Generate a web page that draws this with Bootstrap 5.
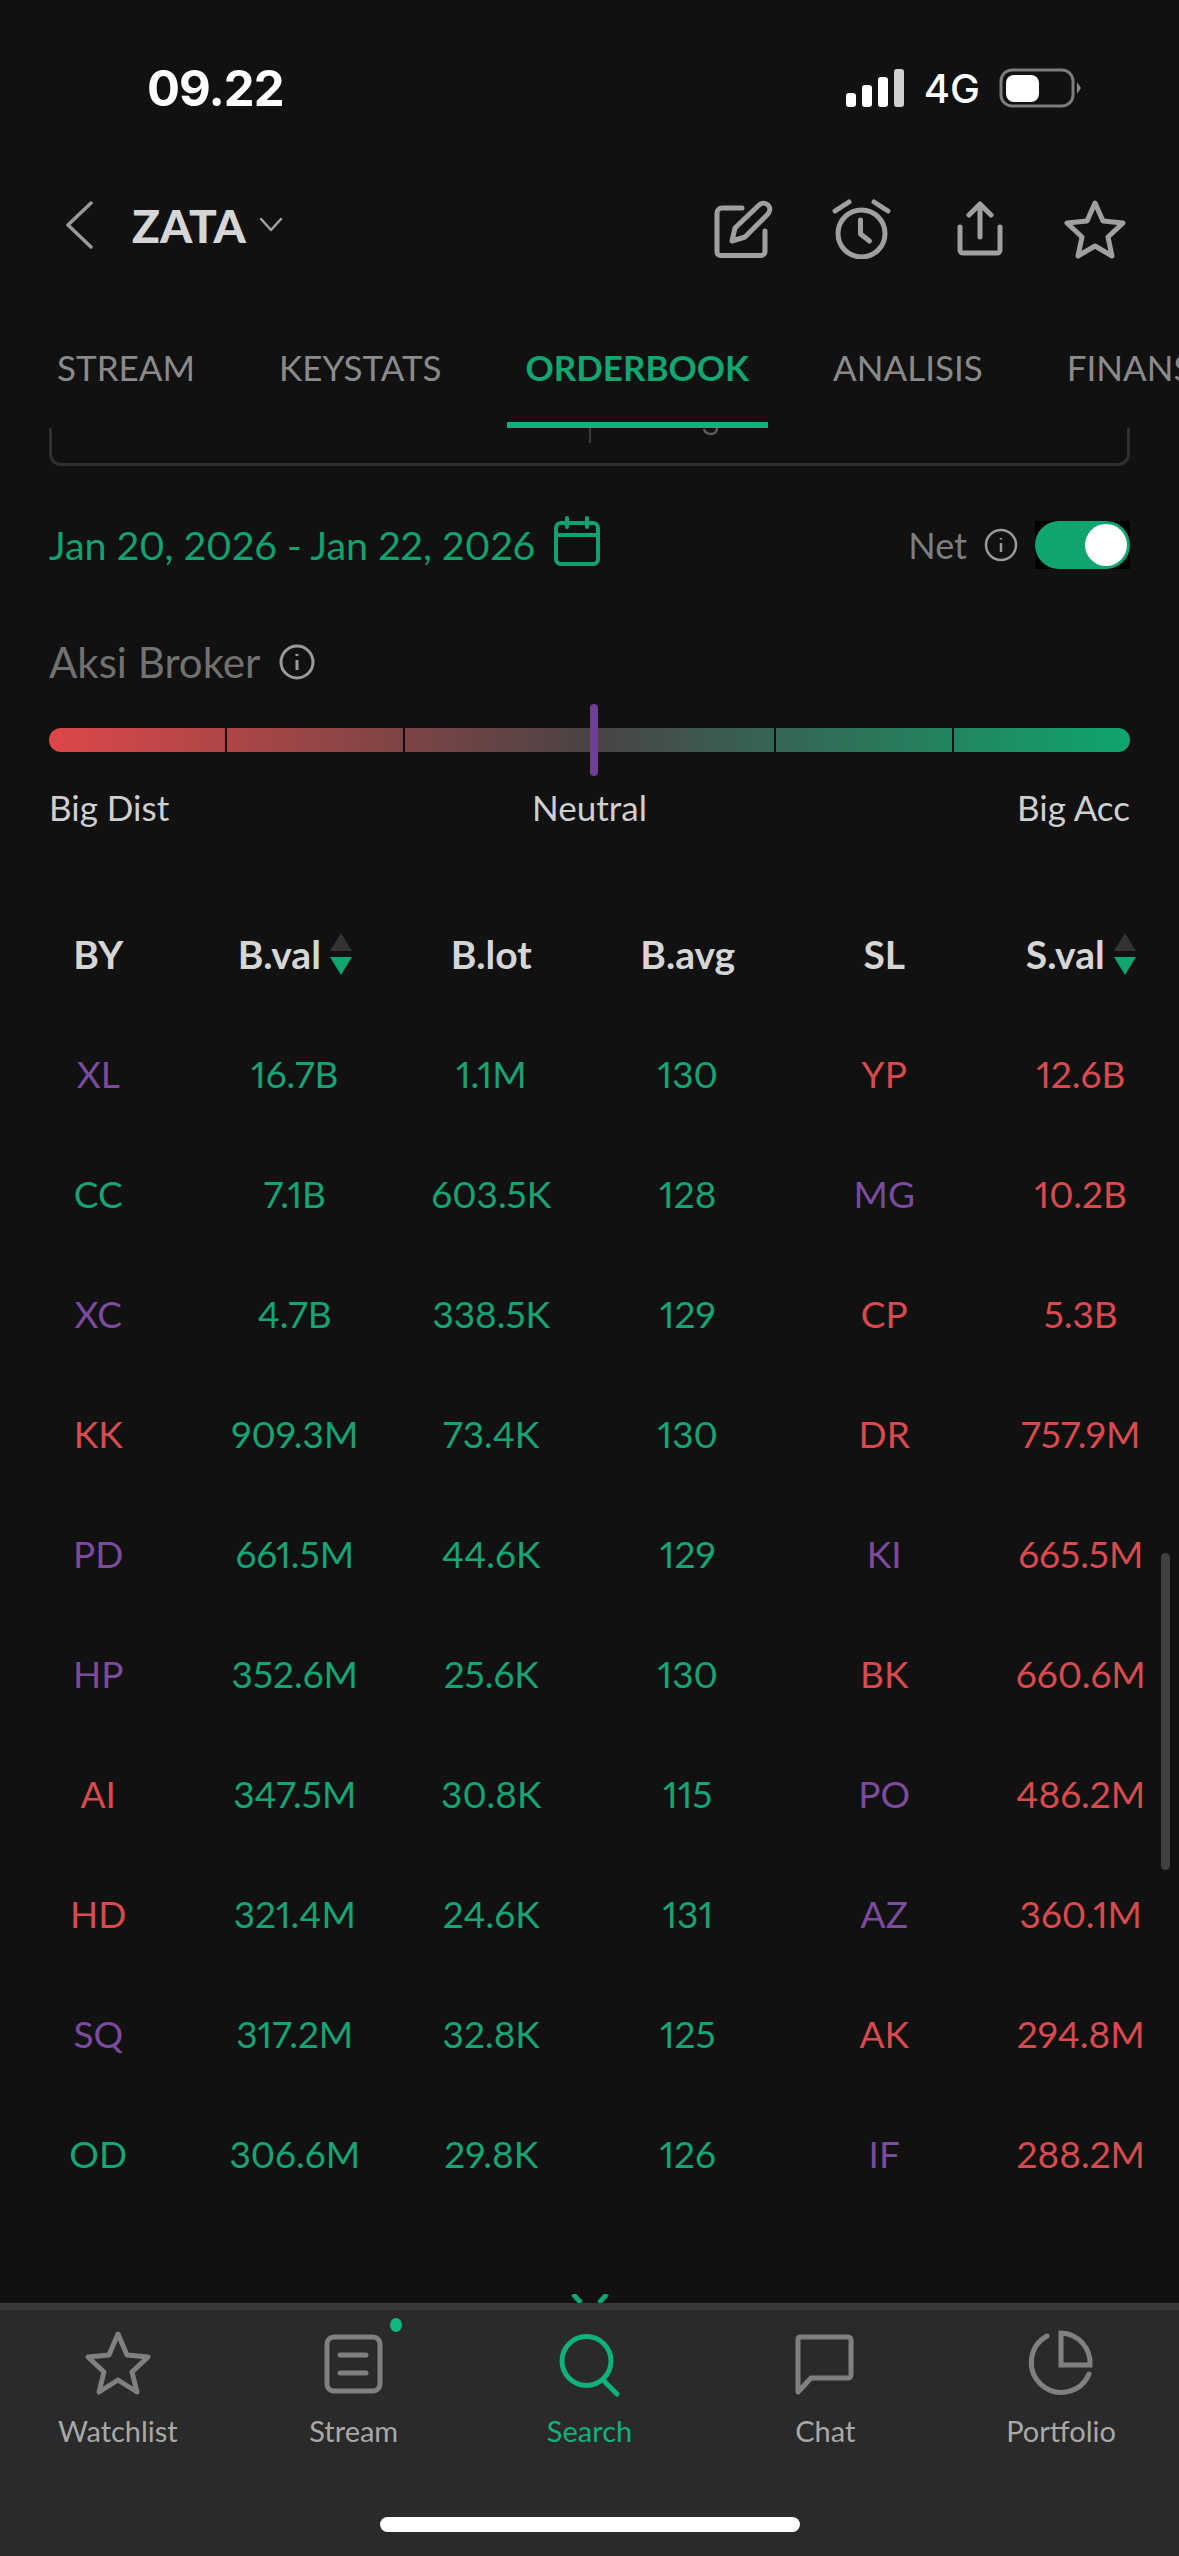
<!DOCTYPE html>
<html lang="en">
<head>
  <meta charset="UTF-8" />
  <meta name="viewport" content="width=device-width, initial-scale=1.0"/>
  <title>ZATA - Orderbook</title>
  <link rel="stylesheet" href="https://cdn.jsdelivr.net/npm/bootstrap@5.3.0/dist/css/bootstrap.min.css"/>
  <style>
    html, body { background: #111112; }
    body { font-family: Lato, "Open Sans", sans-serif; color: #d8d8d8; font-variant-numeric: proportional-nums; }
    .phone { width: 1179px; height: 2556px; overflow: hidden; }
    .status-bar { height: 176px; padding: 0 98px 0 147px; }
    .status-time { font: 700 49px Inter, sans-serif; color: #fff; letter-spacing: -1px; }
    .status-net { font: 500 40px Inter, sans-serif; color: #fff; margin: 0 19px 0 20px; }
    .top-bar { height: 98px; padding: 0 53px 0 64px; }
    .ticker { font-size: 46px; font-weight: 900; color: #d6d6d6; margin-left: 38px; margin-right: 13px; }
    .top-icons { margin-top: 7px; }
    .ic-alarm { margin-left: 58px; }
    .ic-share { margin-left: 65px; }
    .ic-star { margin-left: 61px; }
    .tab-bar { height: 122px; margin-top: 32px; padding-left: 57px; gap: 84px; white-space: nowrap; overflow: hidden; }
    .tab-item { position: relative; font-size: 35px; color: #8a8a8a; line-height: 122px; }
    .tab-item.active { color: #12a670; font-weight: 700; }
    .tab-item.active::after { content: ""; position: absolute; left: -18px; right: -19px; bottom: 0; height: 6px; background: #10b27c; }
    .card-stub { height: 38px; margin: 0 49px; border: 3px solid #2f2f2f; border-top: 0; border-radius: 0 0 12px 12px; position: relative; }
    .card-stub i { position: absolute; left: 537px; top: 0; width: 2px; height: 15px; background: #3a3a3a; }
    .card-stub svg { position: absolute; left: 649px; top: 0; }
    .date-row { height: 48px; margin-top: 55px; padding: 0 49px; }
    .date-text { font-size: 39.5px; color: #12a26f; margin-right: 18px; }
    .date-cal { margin-top: -8px; }
    .net-label { font-size: 36px; color: #7d7d7d; margin-right: 17px; }
    .net-toggle { width: 95px; height: 48px; margin-left: 17px; background: #000; }
    .net-toggle div { width: 100%; height: 100%; background: #10a56f; border-radius: 24px; padding: 3px; }
    .net-toggle span { display: block; width: 42px; height: 42px; border-radius: 50%; background: #fff; margin-left: auto; }
    .aksi-row { margin-top: 68px; padding: 0 49px; height: 50px; }
    .aksi-label { font-size: 42px; color: #717171; margin-right: 19px; }
    .meter-wrap { position: relative; margin: 41px 49px 0; height: 24px; }
    .meter { height: 24px; border-radius: 12px; overflow: hidden; background: linear-gradient(90deg, #df4749 0%, #4a4344 50%, #0fa56f 100%); }
    .meter-seg { height: 100%; border-right: 2px solid #111112; }
    .meter-seg:nth-child(1) { width: 177.5px; }
    .meter-seg:nth-child(2) { width: 178.5px; }
    .meter-seg:nth-child(3) { width: 370.5px; }
    .meter-seg:nth-child(4) { width: 178px; }
    .meter-mark { position: absolute; left: 541px; top: -24px; width: 8px; height: 72px; border-radius: 4px; background: #6f3f94; }
    .meter-labels { padding: 0 49px; margin-top: 37px; font-size: 35px; line-height: 36px; color: #cfcfcf; }
    .book-head { margin-top: 99px; margin-bottom: 30px; height: 60px; font-size: 39px; font-weight: 700; color: #d6d6d6; }
    .book-row { height: 120px; font-size: 37px; }
    .sort-icon { margin-left: 9px; }
    .c-g { color: #17a374; }
    .c-r { color: #d94a4e; }
    .c-p { color: #7c4a9f; }
    .page-main { position: relative; flex: 1 1 auto; overflow: hidden; }
    .scroll-thumb { position: absolute; right: 9px; top: 1553px; width: 9px; height: 317px; border-radius: 5px; background: #3f3f3f; }
    .more-chevron { position: absolute; left: 571px; bottom: -1px; }
    .tab-nav { height: 253px; background: #2a2a2a; border-top: 7px solid #383838; position: relative; }
    .nav-cell { width: 20%; text-align: center; font-size: 29px; color: #a8a8a8; padding-top: 20px; position: relative; }
    .nav-cell.active { color: #10b27c; }
    .nav-glyph { height: 68px; display: block; margin: 0 auto 11px; }
    .stream-dot { position: absolute; left: 154px; top: 8px; width: 12px; height: 14px; border-radius: 50%; background: #10b981; }
    .home-bar { position: absolute; left: 380px; top: 207px; width: 420px; height: 15px; border-radius: 8px; background: #fff; }
  </style>
</head>
<body>
  <div class="phone d-flex flex-column">
    <div class="page-main">
      <div class="status-bar d-flex align-items-center justify-content-between">
        <div class="status-time">09.22</div>
        <div class="d-flex align-items-center">
          <svg width="58" height="38" viewBox="0 0 58 38"><rect x="0" y="24" width="10" height="14" rx="3" fill="#fff"/><rect x="16" y="16" width="10" height="22" rx="3" fill="#fff"/><rect x="32" y="8" width="10" height="30" rx="3" fill="#fff"/><rect x="48" y="0" width="10" height="38" rx="3" fill="#d0d0d0"/></svg>
          <span class="status-net">4G</span>
          <svg width="82" height="40" viewBox="0 0 82 40"><rect x="2" y="2" width="72" height="36" rx="11" fill="none" stroke="#7c7c7c" stroke-width="3"/><rect x="7" y="7" width="33" height="27" rx="8" fill="#fff"/><path d="M78 14l4 6-4 6z" fill="#8a8a8a"/></svg>
        </div>
      </div>

      <div class="top-bar d-flex align-items-center justify-content-between">
        <div class="d-flex align-items-center">
          <svg width="30" height="48" viewBox="0 0 30 48"><path d="M27 2L4 24l23 22" fill="none" stroke="#9a9a9a" stroke-width="3.5" stroke-linecap="round" stroke-linejoin="round"/></svg>
          <span class="ticker">ZATA</span>
          <svg width="24" height="16" viewBox="0 0 24 16"><path d="M2 2l10 11L22 2" fill="none" stroke="#a0a0a0" stroke-width="2.5" stroke-linecap="round" stroke-linejoin="round"/></svg>
        </div>
        <div class="top-icons d-flex align-items-center">
          <svg width="60" height="60" viewBox="0 0 60 60" fill="none" stroke="#a0a0a0" stroke-width="5" stroke-linecap="round" stroke-linejoin="round"><path d="M28 9H8a5 5 0 0 0-5 5v39a3.5 3.5 0 0 0 3.5 3.5H47a4 4 0 0 0 4-4V32"/><path d="M18 42l3-13L44 7c3-3 7-4 10-1s2 7-1 10L31 38z"/></svg>
          <svg class="ic-alarm" width="60" height="60" viewBox="0 0 60 60" fill="none" stroke="#a0a0a0" stroke-width="5" stroke-linecap="round" stroke-linejoin="round"><circle cx="29.5" cy="34.5" r="23.5"/><path d="M28.5 21v14l9 7"/><path d="M3 12L17 3M56 12L42 3"/></svg>
          <svg class="ic-share" width="46" height="56" viewBox="0 0 46 56" fill="none" stroke="#a0a0a0" stroke-width="5" stroke-linecap="round" stroke-linejoin="round"><path d="M23 36V4M12 14L23 3l11 11"/><path d="M3 26v23a3 3 0 0 0 3 3h34a3 3 0 0 0 3-3V26"/></svg>
          <svg class="ic-star" width="62" height="60" viewBox="0 0 62 60" fill="none" stroke="#a0a0a0" stroke-width="5" stroke-linejoin="round"><path d="M31 4l8 18 20 2-15 14 4 19-17-10-17 10 4-19L3 24l20-2z"/></svg>
        </div>
      </div>

      <div class="tab-bar d-flex">
        <div class="tab-item">STREAM</div>
        <div class="tab-item">KEYSTATS</div>
        <div class="tab-item active">ORDERBOOK</div>
        <div class="tab-item">ANALISIS</div>
        <div class="tab-item">FINANSIAL</div>
      </div>
      <div class="card-stub"><i></i><svg width="20" height="8" viewBox="0 0 20 8"><path d="M3 1c1 4 4 5 7 5s6-2 6-6" fill="none" stroke="#5a5a5a" stroke-width="2.5"/></svg></div>

      <div class="date-row d-flex align-items-center">
        <span class="date-text">Jan 20, 2026 - Jan 22, 2026</span>
        <svg class="date-cal" width="48" height="50" viewBox="0 0 48 50" fill="none" stroke="#12a26f" stroke-width="4" stroke-linecap="round"><rect x="3" y="7" width="42" height="41" rx="5"/><path d="M3 19h42M14 2v9M34 2v9"/></svg>
        <div class="ms-auto d-flex align-items-center">
          <span class="net-label">Net</span>
          <svg width="34" height="34" viewBox="0 0 34 34" fill="none" stroke="#9a9a9a" stroke-width="2.5"><circle cx="17" cy="17" r="15"/><path d="M17 15v9M17 10v1.5"/></svg>
          <div class="net-toggle"><div><span></span></div></div>
        </div>
      </div>

      <div class="aksi-row d-flex align-items-center">
        <span class="aksi-label">Aksi Broker</span>
        <svg width="36" height="36" viewBox="0 0 36 36" fill="none" stroke="#9a9a9a" stroke-width="3"><circle cx="18" cy="18" r="16"/><path d="M18 16v10M18 10v2"/></svg>
      </div>

      <div class="meter-wrap">
        <div class="meter d-flex">
          <span class="meter-seg"></span>
          <span class="meter-seg"></span>
          <span class="meter-seg"></span>
          <span class="meter-seg"></span>
        </div>
        <div class="meter-mark"></div>
      </div>
      <div class="meter-labels row g-0">
        <span class="col-4">Big Dist</span><span class="col-4 text-center">Neutral</span><span class="col-4 text-end">Big Acc</span>
      </div>

      <div class="book-head row g-0 align-items-center text-center">
        <div class="col-2">BY</div>
        <div class="col-2 d-flex align-items-center justify-content-center">B.val<svg class="sort-icon" width="22" height="42" viewBox="0 0 22 42"><path d="M11 0l11 18H0z" fill="#333"/><path d="M11 42L0 24h22z" fill="#10a56f"/></svg></div>
        <div class="col-2">B.lot</div>
        <div class="col-2">B.avg</div>
        <div class="col-2">SL</div>
        <div class="col-2 d-flex align-items-center justify-content-center">S.val<svg class="sort-icon" width="22" height="42" viewBox="0 0 22 42"><path d="M11 0l11 18H0z" fill="#333"/><path d="M11 42L0 24h22z" fill="#10a56f"/></svg></div>
      </div>
      <div id="bookRows"></div>

      <div class="scroll-thumb"></div>
      <svg class="more-chevron" width="38" height="10" viewBox="0 0 38 10"><path d="M2 0l8 9M36 0l-8 9" fill="none" stroke="#10a56f" stroke-width="5"/></svg>
    </div>

    <div class="tab-nav d-flex">
      <div class="nav-cell">
        <svg class="nav-glyph" width="68" height="68" viewBox="0 0 68 68" fill="none" stroke="#808080" stroke-width="5" stroke-linejoin="round"><path d="M34 4l9 21 21 2-16 15 5 20-19-12-19 12 5-20L4 27l21-2z"/></svg>
        Watchlist
      </div>
      <div class="nav-cell">
        <svg class="nav-glyph" width="68" height="68" viewBox="0 0 68 68" fill="none" stroke="#808080" stroke-width="5" stroke-linecap="round"><rect x="7" y="7" width="53" height="54" rx="7"/><path d="M20 25h26M20 43h26"/></svg>
        <span class="stream-dot"></span>
        Stream
      </div>
      <div class="nav-cell active">
        <svg class="nav-glyph" width="68" height="68" viewBox="0 0 68 68" fill="none" stroke="#10b27c" stroke-width="5" stroke-linecap="round"><circle cx="31.5" cy="31" r="24.5"/><path d="M48 50l14 14"/></svg>
        Search
      </div>
      <div class="nav-cell">
        <svg class="nav-glyph" width="68" height="68" viewBox="0 0 68 68" fill="none" stroke="#808080" stroke-width="5" stroke-linejoin="round"><path d="M9 7h48a3 3 0 0 1 3 3v35a3 3 0 0 1-3 3H20L7 62V9a2 2 0 0 1 2-2z"/></svg>
        Chat
      </div>
      <div class="nav-cell">
        <svg class="nav-glyph" width="68" height="68" viewBox="0 0 68 68" fill="none" stroke="#808080" stroke-width="5" stroke-linecap="round"><path d="M20 6A30 30 0 1 0 62 44"/><path d="M34 3A30 30 0 0 1 63 35H34z"/></svg>
        Portfolio
      </div>
      <div class="home-bar"></div>
    </div>
  </div>

  <script>
    // by, b.val, b.lot, b.avg, sl, s.val
    const rows = [
      ['XL', 'p', '16.7B', '1.1M', '130', 'YP', 'r', '12.6B'],
      ['CC', 'g', '7.1B', '603.5K', '128', 'MG', 'p', '10.2B'],
      ['XC', 'p', '4.7B', '338.5K', '129', 'CP', 'r', '5.3B'],
      ['KK', 'r', '909.3M', '73.4K', '130', 'DR', 'r', '757.9M'],
      ['PD', 'p', '661.5M', '44.6K', '129', 'KI', 'p', '665.5M'],
      ['HP', 'p', '352.6M', '25.6K', '130', 'BK', 'r', '660.6M'],
      ['AI', 'r', '347.5M', '30.8K', '115', 'PO', 'p', '486.2M'],
      ['HD', 'r', '321.4M', '24.6K', '131', 'AZ', 'p', '360.1M'],
      ['SQ', 'p', '317.2M', '32.8K', '125', 'AK', 'r', '294.8M'],
      ['OD', 'g', '306.6M', '29.8K', '126', 'IF', 'p', '288.2M']
    ];
    document.getElementById('bookRows').innerHTML = rows.map(r => `
      <div class="book-row row g-0 align-items-center text-center">
        <div class="col-2 c-${r[1]}">${r[0]}</div>
        <div class="col-2 c-g">${r[2]}</div>
        <div class="col-2 c-g">${r[3]}</div>
        <div class="col-2 c-g">${r[4]}</div>
        <div class="col-2 c-${r[6]}">${r[5]}</div>
        <div class="col-2 c-r">${r[7]}</div>
      </div>`).join('');
  </script>
  <script src="https://cdn.jsdelivr.net/npm/bootstrap@5.3.0/dist/js/bootstrap.bundle.min.js"></script>
</body>
</html>
